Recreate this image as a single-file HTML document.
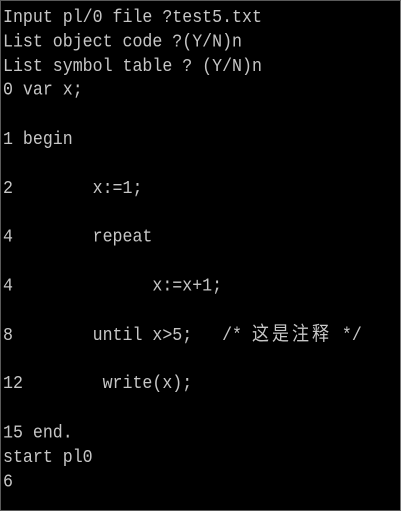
<!DOCTYPE html>
<html><head><meta charset="utf-8"><style>
html,body{margin:0;padding:0;background:#000;width:401px;height:511px;overflow:hidden}
.b{position:absolute;left:0;top:0;width:399px;height:509px;border:1px solid #5a5a5a;border-right-color:#777}
pre{position:absolute;left:3px;top:5px;margin:0;color:#c6c6c6;font-family:"Liberation Mono","Noto Sans CJK SC",monospace;font-size:16.6px;line-height:21.83px;white-space:pre;transform:scaleY(1.12);transform-origin:0 0}
.c{display:inline-block;width:80px;letter-spacing:3px;font-size:17px;line-height:1}
</style></head><body><div class="b"></div>
<pre>Input pl/0 file ?test5.txt
List object code ?(Y/N)n
List symbol table ? (Y/N)n
0 var x;

1 begin

2        x:=1;

4        repeat

4              x:=x+1;

8        until x&gt;5;   /* <span class="c">这是注释</span> */

12        write(x);

15 end.
start pl0
6</pre>
</body></html>
